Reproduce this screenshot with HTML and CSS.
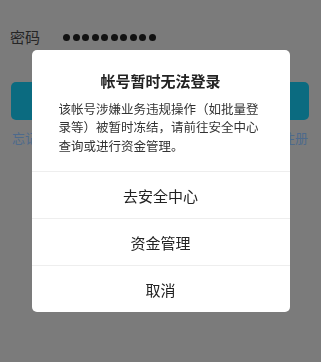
FILE: index.html
```html
<!DOCTYPE html>
<html lang="zh">
<head>
<meta charset="utf-8">
<title>登录</title>
<link rel="stylesheet" href="styles.css">
</head>
<body>
<div class="page">
  <div class="pwd-row">
    <span class="label">密码</span>
    <span class="dots"><i></i><i></i><i></i><i></i><i></i><i></i><i></i><i></i><i></i><i></i></span>
  </div>
  <div class="login-btn"></div>
  <div class="links">
    <span>忘记密码</span>
    <span>快速注册</span>
  </div>
</div>
<div class="mask">
  <div class="dialog">
    <div class="dialog-body">
      <div class="title">帐号暂时无法登录</div>
      <div class="desc">该帐号涉嫌业务违规操作（如批量登录等）被暂时冻结，请前往安全中心查询或进行资金管理。</div>
    </div>
    <div class="action">去安全中心</div>
    <div class="action">资金管理</div>
    <div class="action">取消</div>
  </div>
</div>
</body>
</html>
```
FILE: styles.css
```css
html, body {
  margin: 0;
  padding: 0;
}
body {
  width: 321px;
  height: 362px;
  overflow: hidden;
  background: #7b7b7b;
  font-family: "Noto Sans CJK SC", "Noto Sans", sans-serif;
}
.page {
  padding: 26px 12px 0 11px;
}
.pwd-row {
  display: flex;
  align-items: center;
  height: 22px;
  padding-left: -1px;
}
.label {
  width: 52px;
  font-size: 15px;
  line-height: 22px;
  color: #262626;
  margin-left: -1px;
}
.dots {
  display: flex;
  gap: 2.5px;
  margin-left: 1px;
}
.dots i {
  display: block;
  width: 7px;
  height: 7px;
  border-radius: 50%;
  background: #111;
}
.login-btn {
  margin-top: 34px;
  height: 38px;
  border-radius: 5px;
  background: #0b6b80;
}
.links {
  margin-top: 9px;
  display: flex;
  justify-content: space-between;
  font-size: 13px;
  line-height: 18px;
  color: #4d6a8c;
  padding: 0 1px;
}
.mask {
  position: fixed;
  inset: 0;
  display: flex;
  align-items: center;
  justify-content: center;
}
.dialog {
  width: 258px;
  background: #fff;
  border-radius: 5px;
  overflow: hidden;
}
.dialog-body {
  padding: 20px 24px 16px 27px;
}
.title {
  font-size: 15px;
  font-weight: 700;
  line-height: 22px;
  color: #222;
  text-align: center;
  margin-left: -3px;
}
.desc {
  margin-top: 8px;
  font-size: 12.5px;
  line-height: 18.5px;
  color: #333;
}
.action {
  border-top: 1px solid #eeeeee;
  height: 46px;
  display: flex;
  align-items: center;
  justify-content: center;
  font-size: 15px;
  color: #222;
}
```
